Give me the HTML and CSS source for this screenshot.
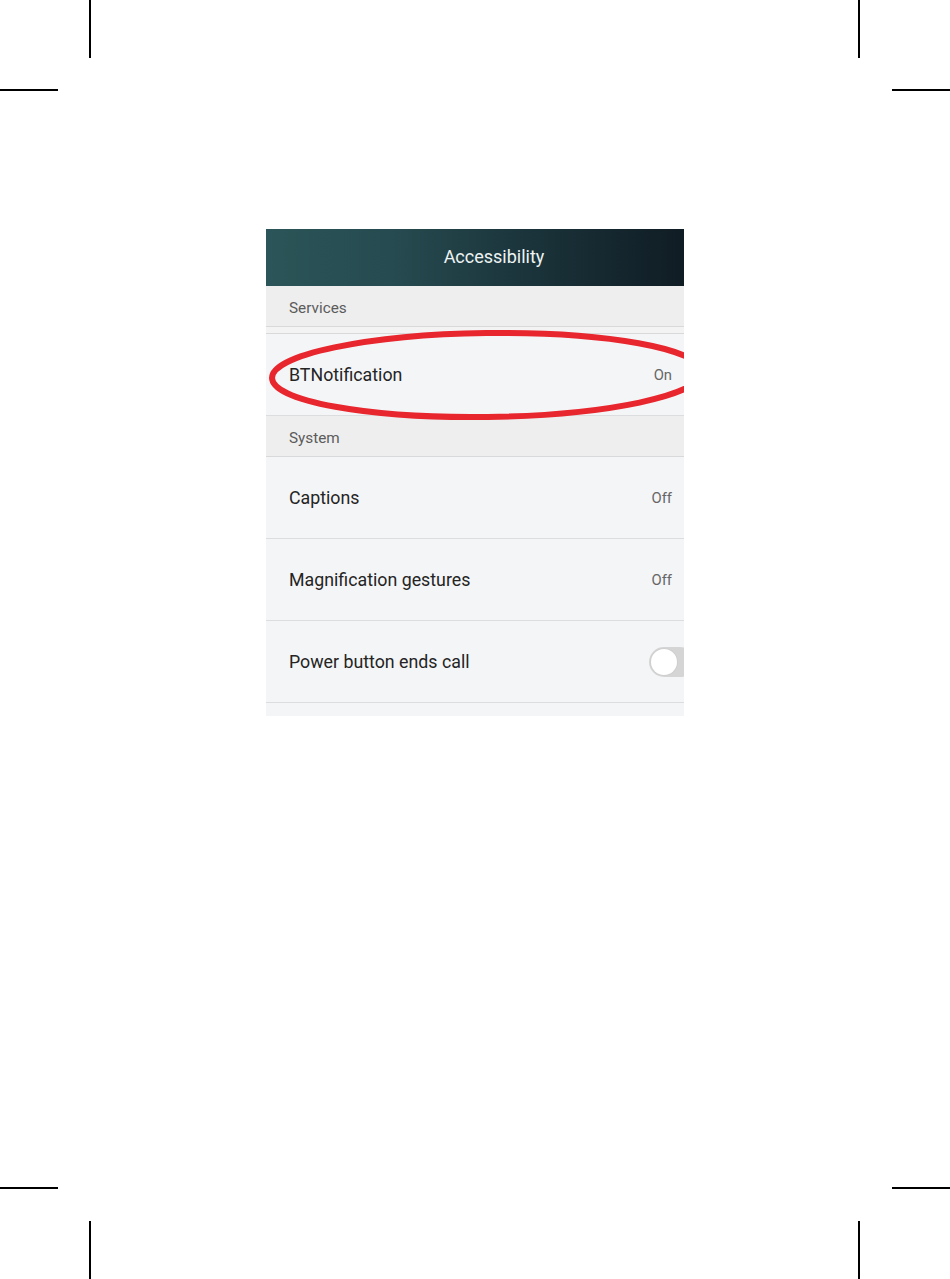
FILE: index.html
```html
<!DOCTYPE html>
<html lang="en">
<head>
  <meta charset="UTF-8">
  <title>Accessibility</title>
  <link rel="stylesheet" href="styles.css">
</head>
<body>
  <!-- Crop marks -->
  <div class="mark v tl"></div><div class="mark h tl"></div>
  <div class="mark v tr"></div><div class="mark h tr"></div>
  <div class="mark v bl"></div><div class="mark h bl"></div>
  <div class="mark v br"></div><div class="mark h br"></div>

  <div class="page">
    <div class="screen">
      <header class="app-bar">Accessibility</header>

      <div class="section">Services</div>
      <div class="spacer"></div>
      <div class="row">
        <span class="label">BTNotification</span>
        <span class="value">On</span>
      </div>

      <div class="section">System</div>
      <div class="row">
        <span class="label">Captions</span>
        <span class="value">Off</span>
      </div>
      <div class="row">
        <span class="label">Magnification gestures</span>
        <span class="value">Off</span>
      </div>
      <div class="row">
        <span class="label">Power button ends call</span>
        <span class="switch"><span class="knob"></span></span>
      </div>
      <div class="row-tail"></div>

      <!-- Red marker circle -->
      <svg class="highlight" width="418" height="100" viewBox="0 0 418 100">
        <ellipse cx="221" cy="50" rx="215" ry="42" fill="none" stroke="#e8262d" stroke-width="6" transform="rotate(-0.8 221 50)"/>
      </svg>
    </div>
  </div>
</body>
</html>
```

FILE: styles.css
```css
/* Global */
body {
  margin: 0;
  background: #ffffff;
  font-family: Roboto, 'Liberation Sans', sans-serif;
  width: 950px;
  height: 1279px;
  position: relative;
  overflow: hidden;
}

/* Crop marks */
.mark {
  position: absolute;
  background: #000;
}
.mark.v { width: 2px; height: 58px; }
.mark.h { width: 58px; height: 2px; }
.mark.v.tl { left: 89px; top: 0; }
.mark.h.tl { left: 0; top: 89px; }
.mark.v.tr { left: 858px; top: 0; }
.mark.h.tr { right: 0; top: 89px; }
.mark.v.bl { left: 89px; bottom: 0; }
.mark.h.bl { left: 0; top: 1187px; }
.mark.v.br { left: 858px; bottom: 0; }
.mark.h.br { right: 0; top: 1187px; }

/* Page */
.page {
  display: flex;
  justify-content: center;
  padding-top: 229px;
}

.screen {
  width: 418px;
  background: #f4f5f7;
  position: relative;
  overflow: hidden;
}

/* Title bar */
.app-bar {
  height: 57px;
  display: flex;
  align-items: center;
  justify-content: center;
  padding: 0 0 2px 38px;
  box-sizing: border-box;
  color: #eef3f3;
  font-size: 18px;
  background: linear-gradient(90deg, #2b5558 0%, #264b50 30%, #1b343b 62%, #101c24 100%);
}

/* Section headers */
.section {
  height: 41px;
  display: flex;
  align-items: center;
  padding: 3px 0 0 23px;
  box-sizing: border-box;
  font-size: 15.3px;
  color: #5b5b5b;
  background: #eeeeee;
  border-bottom: 1px solid #d9d9d9;
}

.spacer {
  height: 6px;
  background: #f3f3f3;
  border-bottom: 1px solid #d9d9d9;
}

/* Rows */
.row {
  height: 81px;
  display: flex;
  align-items: center;
  justify-content: space-between;
  padding: 0 12px 0 23px;
  border-bottom: 1px solid #dcdddf;
}

.label {
  font-size: 17.8px;
  color: #242424;
}

.value {
  font-size: 14.8px;
  color: #666666;
}

.row-tail {
  height: 13px;
}

/* Toggle switch */
.switch {
  width: 46px;
  height: 30px;
  margin-right: -23px;
  border-radius: 15px;
  background: #d5d5d5;
  display: flex;
  align-items: center;
  padding-left: 2px;
  box-sizing: border-box;
}

.knob {
  width: 26px;
  height: 26px;
  border-radius: 50%;
  background: #ffffff;
  box-shadow: 0 0 0 1px #cfcfcf;
}

/* Marker */
.highlight {
  position: absolute;
  left: 0;
  top: 96px;
}
```
